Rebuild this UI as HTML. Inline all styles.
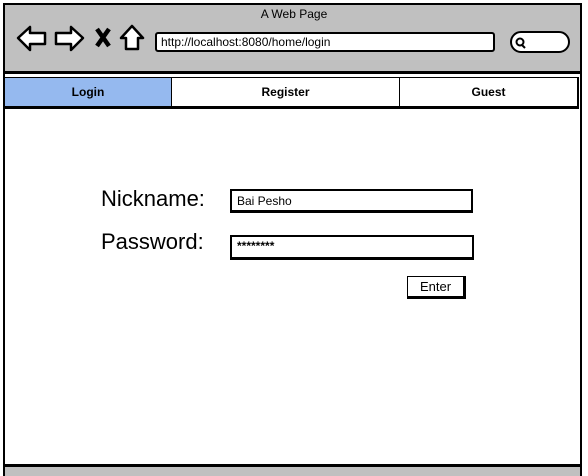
<!DOCTYPE html>
<html><head><style>
*{margin:0;padding:0;box-sizing:border-box}
body{width:588px;height:476px;background:#fff;position:relative;overflow:hidden;font-family:"Comic Sans MS","Liberation Sans",sans-serif;color:#000}
.a{position:absolute}
</style></head><body>
<div class="a" style="left:3px;top:3px;width:579px;height:71px;background:#c0c0c0;border:2px solid #000;border-bottom:3px solid #000"></div>
<div class="a" style="left:0;top:7px;width:588px;text-align:center;font-size:12px">A Web Page</div>
<svg class="a" style="left:0;top:0" width="588" height="74">
<g fill="#fff" stroke="#000" stroke-width="2.5" stroke-linejoin="round">
<path d="M18 38 L30 27 L30 33 L45 33 L45 44 L30 44 L30 50 Z"/>
<path d="M83 38 L71 27 L71 33 L56 33 L56 44 L71 44 L71 50 Z"/>
<path d="M132 26 L143 38 L138 38 L138 49 L126 49 L126 38 L121 38 Z"/>
</g>
<path d="M97 29 L109 46 M109 29 L97 46" stroke="#000" stroke-width="4.5"/>
<rect x="156" y="33" width="338" height="18" rx="2" fill="#fff" stroke="#000" stroke-width="2"/>
<rect x="511" y="32" width="58" height="20" rx="10" fill="#fff" stroke="#000" stroke-width="2"/>
<circle cx="520" cy="42" r="3.5" fill="none" stroke="#000" stroke-width="2"/>
<path d="M522 45 L525 48" stroke="#000" stroke-width="2"/>
</svg>
<div class="a" style="left:161px;top:35px;font-size:12px">http://localhost:8080/home/login</div>
<div class="a" style="left:3px;top:74px;width:579px;height:393px;border-left:2px solid #000;border-right:2px solid #000;border-bottom:3px solid #000"></div>
<div class="a" style="left:3px;top:467px;width:579px;height:9px;background:#c0c0c0;border-left:2px solid #000;border-right:2px solid #000"></div>
<div class="a" style="left:4px;top:77px;width:168px;height:32px;background:#95b9ef;border:1px solid #000;border-bottom:3px solid #000;font-size:12px;font-weight:bold;text-align:center;line-height:29px">Login</div>
<div class="a" style="left:171px;top:77px;width:229px;height:32px;background:#fff;border:1px solid #000;border-bottom:3px solid #000;font-size:12px;font-weight:bold;text-align:center;line-height:29px">Register</div>
<div class="a" style="left:399px;top:77px;width:180px;height:32px;background:#fff;border:1px solid #000;border-right:2px solid #000;border-bottom:3px solid #000;font-size:12px;font-weight:bold;text-align:center;line-height:29px">Guest</div>
<div class="a" style="left:101px;top:186px;font-size:22px">Nickname:</div>
<div class="a" style="left:101px;top:229px;font-size:22px">Password:</div>
<div class="a" style="left:230px;top:189px;width:243px;height:24px;border:2px solid #000;border-bottom:3px solid #000;font-size:12px;padding:3px 5px">Bai Pesho</div>
<div class="a" style="left:230px;top:235px;width:244px;height:25px;border:2px solid #000;border-bottom:3px solid #000;font-size:12px;padding:2px 5px;font-weight:bold">********</div>
<div class="a" style="left:407px;top:276px;width:59px;height:23px;border:1px solid #000;border-right:3px solid #000;border-bottom:3px solid #000;font-size:13px;text-align:center;line-height:19px">Enter</div>
</body></html>
